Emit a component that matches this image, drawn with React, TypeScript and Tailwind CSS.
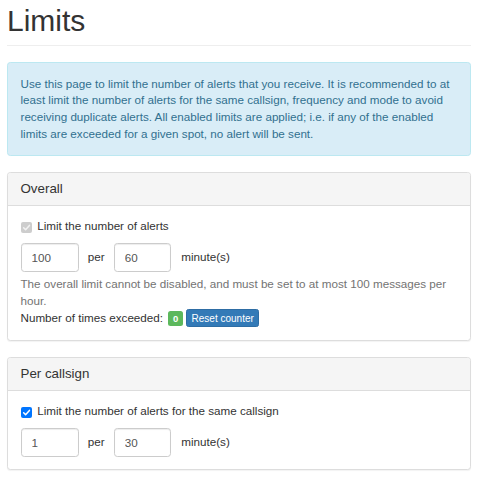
import React from "react";

function Check({ disabled }: { disabled?: boolean }) {
  return (
    <span
      className={
        "mt-[3.4px] mr-[5.7px] flex h-[11px] w-[11px] shrink-0 items-center justify-center rounded-[2px] " +
        (disabled ? "bg-[#cdcdcd]" : "bg-[#0075ff]")
      }
    >
      <svg width="9" height="9" viewBox="0 0 12 12" fill="none">
        <path
          d="M2.2 6.4 L4.8 9 L9.9 3.2"
          stroke={disabled ? "#f2f2f2" : "#ffffff"}
          strokeWidth="2"
          strokeLinecap="round"
          strokeLinejoin="round"
        />
      </svg>
    </span>
  );
}

function NumberRow({ a, b }: { a: string; b: string }) {
  return (
    <div className="mt-[8.6px] flex items-center">
      <input
        readOnly
        value={a}
        className="h-[28.3px] w-[58px] rounded-[3.33px] border border-[#ccc] px-[10px] text-[11.67px] text-[#555] shadow-[inset_0_1px_1px_rgba(0,0,0,0.075)] outline-none"
      />
      <span className="ml-[9.3px] mr-[9.1px]">per</span>
      <input
        readOnly
        value={b}
        className="h-[28.3px] w-[57.5px] rounded-[3.33px] border border-[#ccc] px-[10px] text-[11.67px] text-[#555] shadow-[inset_0_1px_1px_rgba(0,0,0,0.075)] outline-none"
      />
      <span className="ml-[10px]">minute(s)</span>
    </div>
  );
}

function Panel({ title, children }: { title: string; children: React.ReactNode }) {
  return (
    <div className="mb-[16.67px] rounded-[3.33px] border border-[#ddd] bg-white shadow-[0_1px_1px_rgba(0,0,0,0.05)]">
      <div className="rounded-t-[3px] border-b border-[#ddd] bg-[#f5f5f5] px-[12.5px] py-[8.33px]">
        <h3 className="text-[13.33px] leading-[14.67px] font-normal text-[#333]">{title}</h3>
      </div>
      <div className="p-[12.5px]">{children}</div>
    </div>
  );
}

export default function App() {
  return (
    <div className="min-h-[480px] bg-white pl-[7px] pr-[12px] font-['Liberation_Sans',Arial,sans-serif] text-[11.67px] leading-[16.67px] text-[#333]">
      <div className="mb-[16.5px] border-b border-[#eee] pt-[4px] pb-[7.5px]">
        <h1 className="text-[30px] leading-[33px] font-normal text-[#333]">Limits</h1>
      </div>

      <div className="mb-[16.67px] rounded-[3.33px] border border-[#bce8f1] bg-[#d9edf7] p-[12.5px] text-[#31708f]">
        Use this page to limit the number of alerts that you receive. It is recommended to at least limit the
        number of alerts for the same callsign, frequency and mode to avoid receiving duplicate alerts. All
        enabled limits are applied; i.e. if any of the enabled limits are exceeded for a given spot, no alert will
        be sent.
      </div>

      <Panel title="Overall">
        <div className="flex items-start">
          <Check disabled />
          <span>Limit the number of alerts</span>
        </div>
        <NumberRow a="100" b="60" />
        <div className="mt-[4.17px] text-[#737373]">
          The overall limit cannot be disabled, and must be set to at most 100 messages per hour.
        </div>
        <div className="flex items-baseline">
          <span>Number of times exceeded:</span>
          <span className="ml-[5px] inline-flex h-[15px] w-[15px] items-center justify-center rounded-[2.5px] bg-[#5cb85c] text-[9.5px] leading-[15px] font-bold text-white">
            0
          </span>
          <span className="ml-[3px] inline-flex h-[18px] items-center rounded-[2.5px] border border-[#2e6da4] bg-[#337ab7] px-[4.5px] text-[10px] leading-[15px] text-white">
            Reset counter
          </span>
        </div>
      </Panel>

      <Panel title="Per callsign">
        <div className="flex items-start">
          <Check />
          <span>Limit the number of alerts for the same callsign</span>
        </div>
        <NumberRow a="1" b="30" />
      </Panel>
    </div>
  );
}
